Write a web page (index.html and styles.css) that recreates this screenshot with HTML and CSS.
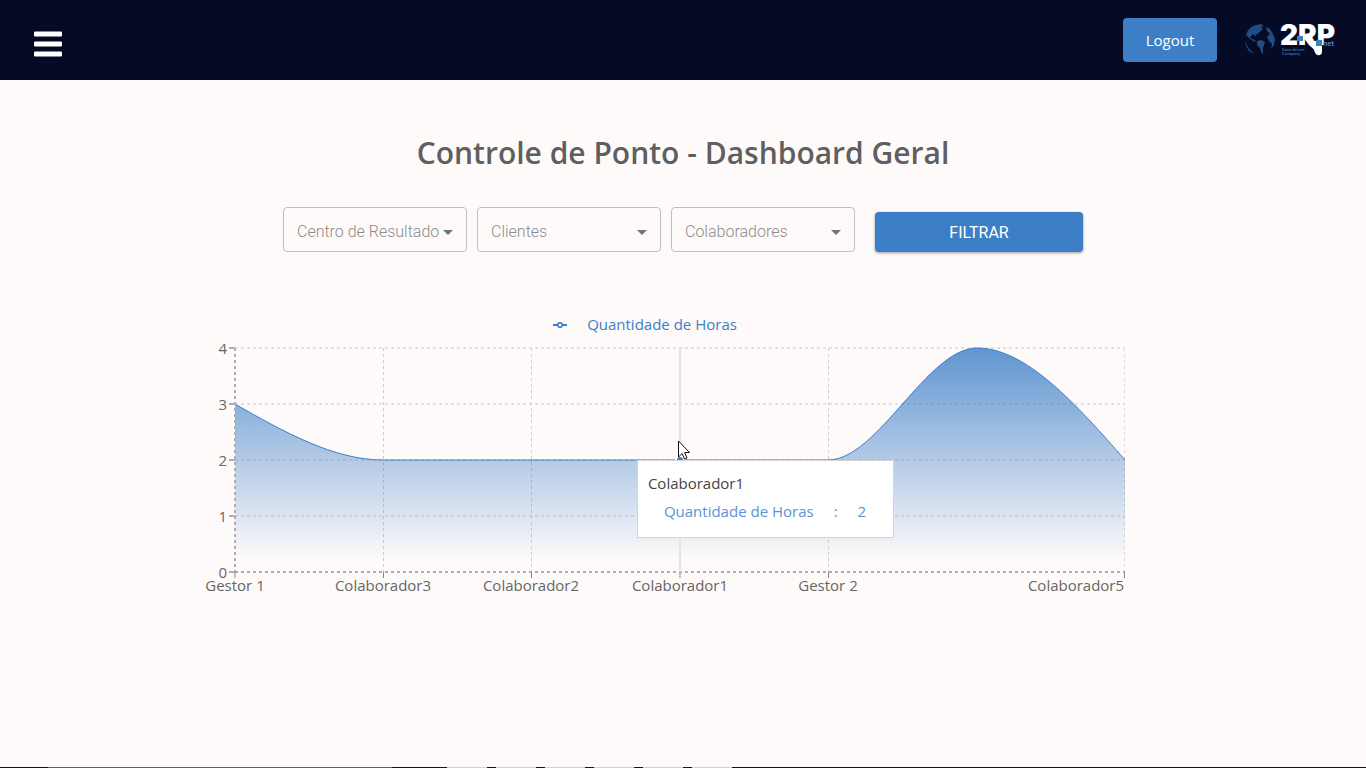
FILE: index.html
```html
<!DOCTYPE html>
<html lang="pt-BR">
<head>
<meta charset="utf-8">
<meta name="viewport" content="width=device-width, initial-scale=1">
<title>Controle de Ponto - Dashboard Geral</title>
<link rel="stylesheet" href="styles.css">
</head>
<body>
<header class="topbar">
  <button class="menu-button" type="button" aria-label="Menu">
    <svg width="28" height="26" viewBox="0 0 28 26" aria-hidden="true">
      <g fill="#fff"><rect y=".5" width="28" height="5" rx="1"/><rect y="10.500" width="28" height="5" rx="1"/><rect y="20.500" width="28" height="5" rx="1"/></g>
    </svg>
  </button>
  <div class="topbar-actions">
    <button class="logout" type="button">Logout</button>
    <svg class="logo" width="91" height="34" viewBox="0 0 91 34" role="img" aria-label="2RP net">
      <defs>
        <pattern id="dots" width="2" height="2" patternUnits="userSpaceOnUse">
          <rect width="2" height="2" fill="#12305c"/><circle cx="1" cy="1" r=".8" fill="#3470b3"/>
        </pattern>
      </defs>
      <g fill="url(#dots)">
        <path d="M1 15C1 9 4 4 11 2L16 1L19 3L16 4L18 6L15 9L12 11L10 13L8 11L5 14L7 16L10 17L11 19L8 18L4 15L2 12Z"/>
        <path d="M12 18L16 17L20 19L19 22L18 25L18 31L16 29L15 25L12 22Z"/>
        <path d="M21 4L25 6L28 11L30 16L29 22L26 26L27 21L24 18L22 14L25 11L22 8Z"/>
        <path d="M0 17L2 23L5 27L10 31L4 28L1 23Z"/>
      </g>
      <text class="logo-name" x="35" y="22">2RP</text>
      <path d="M59 15L64 14L68 18L72 18L77 23V29C77 32 74 33 71.500 31.500C70 30.500 69.500 28 68.500 26L64 22L61 18Z" fill="#fff"/>
      <rect x="52" y="13" width="6" height="5" fill="#3d7fc4"/>
      <rect x="71" y="17" width="6" height="6" fill="#3d7fc4"/>
      <text class="logo-net" x="78" y="23">net</text>
      <text class="logo-tag" x="37" y="28">Data driven</text>
      <text class="logo-tag" x="37" y="32">Company</text>
    </svg>
  </div>
</header>

<main class="content">
  <h1 class="title">Controle de Ponto - Dashboard Geral</h1>

  <form class="filters">
    <div class="field">
      <select class="field-select" aria-label="Centro de Resultado"><option>Centro de Resultado</option></select>
      <svg class="field-arrow" width="10" height="5" viewBox="0 0 10 5" aria-hidden="true"><path d="M0 0H10L5 5Z" fill="#757373"/></svg>
    </div>
    <div class="field">
      <select class="field-select" aria-label="Clientes"><option>Clientes</option></select>
      <svg class="field-arrow" width="10" height="5" viewBox="0 0 10 5" aria-hidden="true"><path d="M0 0H10L5 5Z" fill="#757373"/></svg>
    </div>
    <div class="field">
      <select class="field-select" aria-label="Colaboradores"><option>Colaboradores</option></select>
      <svg class="field-arrow" width="10" height="5" viewBox="0 0 10 5" aria-hidden="true"><path d="M0 0H10L5 5Z" fill="#757373"/></svg>
    </div>
    <button class="filter-button" type="button">FILTRAR</button>
  </form>

  <section class="chart" aria-label="Quantidade de Horas">
    <div class="legend">
      <svg width="14" height="8" viewBox="0 0 14 8" aria-hidden="true"><path d="M0 5H5M9 5H14" stroke="#3d7fc7" stroke-width="2"/><circle cx="7" cy="5" r="2.3" fill="none" stroke="#3d7fc7" stroke-width="1.6"/></svg>
      <span>Quantidade de Horas</span>
    </div>
    <div class="plot">
      <svg class="plot-svg" viewBox="0 0 960 260" aria-hidden="true">
        <defs>
          <linearGradient id="area" x1="0" y1="0" x2="0" y2="1">
            <stop offset="0" stop-color="#3d7fc7" stop-opacity=".82"/>
            <stop offset=".95" stop-color="#3d7fc7" stop-opacity="0"/>
          </linearGradient>
        </defs>
        <g class="grid grid-wide">
          <path d="M32 8H922M32 64H922M32 120H922M32 176H922M32 232H922"/>
          <path d="M32 8V232"/>
        </g>
        <g class="grid"><path d="M180.500 8V232M328.500 8V232M625.500 8V232"/></g>
        <path class="grid grid-end" d="M921.500 8V232"/>
        <path d="M32 64C81 92 131 120 180 120H625C675 120 724 8 774 8C823 8 873 64 922 120V232H32Z" fill="url(#area)"/>
        <path class="curve" d="M32 64C81 92 131 120 180 120H625C675 120 724 8 774 8C823 8 873 64 922 120"/>
        <path class="axis" d="M32 8V232M32 232H922"/>
        <path class="ticks-y" d="M26 8H32M26 64H32M26 120H32M26 176H32M26 232H32"/>
        <path class="ticks-x" d="M32 232V238M180.500 232V238M328.500 232V238M477 232V238M625.500 232V238M921.500 232V238"/>
        <path class="marker-line" d="M477 8V232"/>
        <circle cx="477" cy="120" r="4" fill="#3d7fc7" stroke="#fff" stroke-width="2"/>
        <g class="labels labels-y">
          <text x="24" y="14">4</text><text x="24" y="70">3</text><text x="24" y="126">2</text><text x="24" y="182">1</text><text x="24" y="238">0</text>
        </g>
        <g class="labels labels-x">
          <text x="32" y="251">Gestor 1</text><text x="180" y="251">Colaborador3</text><text x="328" y="251">Colaborador2</text><text x="477" y="251">Colaborador1</text><text x="625" y="251">Gestor 2</text><text x="873" y="251">Colaborador5</text>
        </g>
      </svg>
      <div class="tooltip">
        <p class="tooltip-title">Colaborador1</p>
        <p class="tooltip-row"><span>Quantidade de Horas</span><span>:</span><span>2</span></p>
      </div>
      <svg class="pointer" width="13" height="21" viewBox="0 0 13 21" aria-hidden="true"><path d="M.5 1V17L4.200 13.500L6.500 19L9 18L6.700 12.500H11.500Z" fill="#fff" stroke="#111"/></svg>
    </div>
  </section>
</main>
<footer class="edge" aria-hidden="true"><i class="edge-start"></i><i class="edge-search"></i><i class="edge-gap"></i><i class="edge-items"></i></footer>
</body>
</html>
```
FILE: styles.css
```css
* { box-sizing: border-box; }

body {
  margin: 0;
  min-height: 100vh;
  display: flex;
  flex-direction: column;
  background: #fffafa;
  color: #5f5f5f;
  font-family: "Open Sans", "Noto Sans", sans-serif;
  font-size: 15px;
}

button, select { font: inherit; cursor: pointer; }

.topbar {
  display: flex;
  align-items: center;
  justify-content: space-between;
  min-height: 80px;
  padding: 0 30px 0 34px;
  background: #050a25;
}
.menu-button {
  display: flex;
  padding: 8px 0 0;
  border: 0;
  background: none;
}
.topbar-actions { display: flex; align-items: center; gap: 28px; }
.logout {
  min-width: 94px;
  height: 44px;
  padding: 0 22px;
  border: 0;
  border-radius: 4px;
  background: #3d7fc7;
  color: #fff;
}
.logo { overflow: visible; }
.logo-name { font: 900 28px Inter, sans-serif; fill: #fff; }
.logo-net { font: 700 7px Inter, sans-serif; fill: #3d7fc4; }
.logo-tag { font: 600 4px "Open Sans", sans-serif; fill: #3d7fc4; }

.content {
  flex: 1;
  display: flex;
  flex-direction: column;
  align-items: center;
  padding: 51px 20px 20px;
}
.title {
  margin: 0;
  font-size: 30px;
  line-height: 44px;
  font-weight: 600;
  text-align: center;
}

.filters {
  display: flex;
  flex-wrap: wrap;
  align-items: flex-end;
  justify-content: center;
  gap: 10px;
  margin-top: 32px;
}
.field { position: relative; width: 184px; }
.field-select {
  appearance: none;
  display: block;
  width: 100%;
  height: 45px;
  padding: 4px 20px 0 13px;
  border: 1px solid #c1bebe;
  border-radius: 4px;
  background: transparent;
  color: #8c8a8a;
  font-family: Roboto, sans-serif;
  font-size: 16px;
  font-weight: 300;
}
.field-arrow {
  position: absolute;
  right: 14px;
  top: 23px;
  pointer-events: none;
}
.filter-button {
  width: 208px;
  height: 40px;
  margin-left: 10px;
  border: 0;
  border-radius: 4px;
  background: #3d7fc7;
  box-shadow: 0 1px 3px rgba(0, 0, 0, .4);
  color: #fff;
  font-family: Roboto, sans-serif;
  font-size: 16px;
}

.chart { width: 100%; max-width: 960px; margin-top: 60px; }
.legend {
  display: flex;
  align-items: center;
  justify-content: center;
  gap: 20px;
  padding-right: 76px;
  line-height: 24px;
  color: #3d7fc7;
}
.plot { position: relative; margin-top: 4px; }
.plot-svg { display: block; width: 100%; overflow: visible; }
.grid { fill: none; stroke: #ccc; stroke-width: 1; stroke-dasharray: 3 3; }
.grid-wide { stroke: #e4e0e0; stroke-width: 2; }
.grid-end { stroke: #dfdbdb; }
.curve { fill: none; stroke: #3d7fc7; stroke-width: 1; }
.axis { fill: none; stroke: #b1aeae; stroke-width: 2; stroke-dasharray: 3 3; }
.ticks-y { stroke: #b1aeae; stroke-width: 2; }
.ticks-x { stroke: #8a8888; stroke-width: 1; }
.marker-line { stroke: #e4e2e4; stroke-width: 2; }
.labels { fill: #666; font-size: 15px; }
.labels-y { text-anchor: end; }
.labels-x { text-anchor: middle; }

.tooltip {
  position: absolute;
  left: 45.2%;
  top: 120px;
  padding: 10px 27px 14px 10px;
  border: 1px solid #d6d4d4;
  background: #fff;
  line-height: 24px;
  white-space: nowrap;
}
.tooltip p { margin: 0; }
.tooltip-title { color: #444; }
.tooltip .tooltip-row {
  display: flex;
  gap: 20px;
  margin: 4px 0 0 16px;
  color: #5a94d4;
}
.pointer { position: absolute; left: 49.5%; top: 100px; }

.edge { display: flex; height: 1px; background: #1a1216; }
.edge-start { width: 48px; }
.edge-search { width: 344px; background: #5f5c5e; }
.edge-gap { width: 55px; }
.edge-items { width: 285px; background: repeating-linear-gradient(90deg, #ffbccb 0 40px, #1a1216 40px 49px); }
```
